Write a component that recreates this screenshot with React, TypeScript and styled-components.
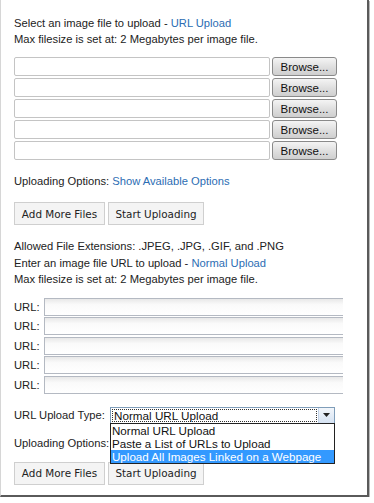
import React from "react";
import styled, { createGlobalStyle } from "styled-components";

const GlobalStyle = createGlobalStyle`
  html, body {
    margin: 0;
    padding: 0;
    background: #fff;
  }
  body {
    font-family: "Liberation Sans", Arial, sans-serif;
    font-size: 11.2px;
    color: #222;
  }
`;

const Frame = styled.div`
  width: 369px;
  height: 497px;
  border-left: 1px solid #d6d6d6;
  border-right: 2px solid #5a5a5a;
  border-bottom: 2px solid #5a5a5a;
  box-shadow: 1px 1px 0 #b8b8b8;
  background: #fff;
  padding: 15px 0 0 13px;
  box-sizing: border-box;
  overflow: hidden;
`;

const Line = styled.div<{ $gap?: number }>`
  line-height: 16px;
  margin-top: ${(p) => p.$gap ?? 0}px;
  white-space: nowrap;
`;

const Link = styled.a`
  color: #2c6db3;
  text-decoration: none;
`;

const FileList = styled.div`
  display: flex;
  flex-direction: column;
  gap: 2px;
  margin-top: 10px;
`;

const FileRow = styled.div`
  display: flex;
  gap: 2px;
  height: 19px;
`;

const FileField = styled.div`
  width: 256px;
  box-sizing: border-box;
  border: 1px solid #c4c4c4;
  border-radius: 2px;
  background: #fff;
`;

const BrowseButton = styled.button`
  width: 65px;
  height: 19px;
  box-sizing: border-box;
  padding: 0;
  border: 1px solid #8a8a8a;
  border-radius: 3px;
  background: linear-gradient(#f4f4f4, #dedede 55%, #cfcfcf);
  font-family: "Liberation Sans", Arial, sans-serif;
  font-size: 11.5px;
  color: #111;
`;

const ButtonRow = styled.div<{ $top: number }>`
  display: flex;
  gap: 3px;
  margin-top: ${(p) => p.$top}px;
`;

const PlainButton = styled.button<{ $w: number }>`
  width: ${(p) => p.$w}px;
  height: 23px;
  box-sizing: border-box;
  padding: 0;
  border: 1px solid #cfcfcf;
  background: #f4f4f4;
  font-family: "DejaVu Sans", Verdana, sans-serif;
  font-size: 10.4px;
  color: #222;
`;

const UrlList = styled.div`
  display: flex;
  flex-direction: column;
  margin-top: 10px;
`;

const UrlRow = styled.div`
  display: flex;
  align-items: center;
  height: 19.5px;
`;

const UrlLabel = styled.span`
  width: 30px;
  line-height: 16px;
`;

const UrlField = styled.div`
  width: 299px;
  height: 18px;
  box-sizing: border-box;
  border: 1px solid #b4b9c2;
  border-right: none;
  background: linear-gradient(#e8e8e8, #fafafa 35%, #fff);
`;

const TypeRow = styled.div`
  position: relative;
  display: flex;
  align-items: center;
  margin-top: 12px;
  height: 17px;
`;

const TypeLabel = styled.span`
  width: 96px;
  flex-shrink: 0;
  line-height: 16px;
  white-space: nowrap;
`;

const SelectBox = styled.div`
  display: flex;
  height: 17px;
  width: 225px;
  box-sizing: border-box;
  border: 1px solid #7f9db9;
`;

const SelectValue = styled.div`
  flex: 1;
  margin: 1px;
  border: 1px dotted #333;
  font-family: "Liberation Sans", Tahoma, sans-serif;
  font-size: 11.7px;
  line-height: 11px;
  padding-left: 1px;
  color: #111;
  white-space: nowrap;
`;

const ArrowButton = styled.div`
  width: 15px;
  display: flex;
  align-items: center;
  justify-content: center;
  background: linear-gradient(#f2f6fb, #d6e3f3);
  border-left: 1px solid #c3d3e8;
`;

const DropList = styled.ul`
  position: absolute;
  left: 96px;
  top: 16px;
  width: 225px;
  margin: 0;
  padding: 0;
  list-style: none;
  box-sizing: border-box;
  border: 1px solid #222;
  background: #fff;
  z-index: 2;
`;

const DropItem = styled.li<{ $active?: boolean }>`
  height: 13.3px;
  padding-left: 1px;
  font-family: "Liberation Sans", Tahoma, sans-serif;
  font-size: 11.6px;
  line-height: 13px;
  white-space: nowrap;
  background: ${(p) => (p.$active ? "#3399ff" : "#fff")};
  color: ${(p) => (p.$active ? "#fff" : "#111")};
`;

const files = [0, 1, 2, 3, 4];
const options = [
  "Normal URL Upload",
  "Paste a List of URLs to Upload",
  "Upload All Images Linked on a Webpage",
];

export default function App() {
  return (
    <>
      <GlobalStyle />
      <Frame>
        <Line>
          Select an image file to upload - <Link href="#">URL Upload</Link>
        </Line>
        <Line>Max filesize is set at: 2 Megabytes per image file.</Line>

        <FileList>
          {files.map((i) => (
            <FileRow key={i}>
              <FileField />
              <BrowseButton>Browse...</BrowseButton>
            </FileRow>
          ))}
        </FileList>

        <Line $gap={13}>
          Uploading Options: <Link href="#">Show Available Options</Link>
        </Line>
        <ButtonRow $top={13}>
          <PlainButton $w={91}>Add More Files</PlainButton>
          <PlainButton $w={96}>Start Uploading</PlainButton>
        </ButtonRow>

        <Line $gap={13}>Allowed File Extensions: .JPEG, .JPG, .GIF, and .PNG</Line>
        <Line $gap={1}>
          Enter an image file URL to upload - <Link href="#">Normal Upload</Link>
        </Line>
        <Line>Max filesize is set at: 2 Megabytes per image file.</Line>

        <UrlList>
          {files.map((i) => (
            <UrlRow key={i}>
              <UrlLabel>URL:</UrlLabel>
              <UrlField />
            </UrlRow>
          ))}
        </UrlList>

        <TypeRow>
          <TypeLabel>URL Upload Type:</TypeLabel>
          <SelectBox>
            <SelectValue>Normal URL Upload</SelectValue>
            <ArrowButton>
              <svg width="7" height="4" viewBox="0 0 7 4">
                <path d="M0 0h7L3.5 4z" fill="#222" />
              </svg>
            </ArrowButton>
          </SelectBox>
          <DropList>
            {options.map((o, i) => (
              <DropItem key={o} $active={i === 2}>
                {o}
              </DropItem>
            ))}
          </DropList>
        </TypeRow>

        <Line $gap={11}>Uploading Options: Show Available Options</Line>
        <ButtonRow $top={11}>
          <PlainButton $w={91}>Add More Files</PlainButton>
          <PlainButton $w={96}>Start Uploading</PlainButton>
        </ButtonRow>
      </Frame>
    </>
  );
}
